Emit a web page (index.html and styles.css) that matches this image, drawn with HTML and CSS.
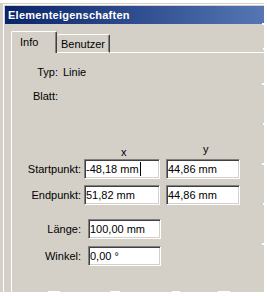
FILE: index.html
```html
<!DOCTYPE html>
<html lang="de">
<head>
    <meta charset="UTF-8">
    <title>Elementeigenschaften</title>
    <link rel="stylesheet" href="styles.css">
</head>
<body>

<div class="window">
    <div class="frame">
        <div class="titlebar">Elementeigenschaften</div>

        <div class="dialog">
            <div class="tabs">
                <div class="tab active">Info</div>
                <div class="tab">Benutzer</div>
                <div class="tab-rest"></div>
            </div>

            <div class="panel">
                <div class="info">
                    <span class="lbl">Typ:</span><span>Linie</span>
                    <span class="lbl">Blatt:</span><span></span>
                </div>

                <div class="coords">
                    <span></span>
                    <span class="head">x</span>
                    <span class="head head-y">y</span>

                    <span class="lbl">Startpunkt:</span>
                    <div class="field wide">-48,18 mm<span class="caret"></span></div>
                    <div class="field">44,86 mm</div>

                    <span class="lbl">Endpunkt:</span>
                    <div class="field wide">51,82 mm</div>
                    <div class="field">44,86 mm</div>
                </div>

                <div class="measures">
                    <span class="lbl">Länge:</span>
                    <div class="field">100,00 mm</div>
                    <span class="lbl">Winkel:</span>
                    <div class="field">0,00 °</div>
                </div>
            </div>
        </div>
    </div>
</div>

</body>
</html>
```

FILE: styles.css
```css
body {
    margin: 0;
    background-color: #ffffff;
    font-family: "Liberation Sans", Arial, sans-serif;
    font-size: 11px;
    color: #000000;
}
.window {
    margin-top: 3px;
    width: 265px;
    height: 290px;
    padding: 1px 0 0 3px;
    box-sizing: border-box;
    background-color: #d4d0c8;
    overflow: hidden;
    /* torn screenshot edge */
    clip-path: polygon(0 0, 264px 0, 264px 20px, 262px 20px, 262px 22px, 264px 22px, 264px 45px, 263px 45px, 263px 47px, 264px 47px, 264px 80px, 262px 80px, 262px 82px, 264px 82px, 264px 120px, 263px 120px, 263px 122px, 264px 122px, 264px 160px, 262px 160px, 262px 162px, 264px 162px, 264px 200px, 263px 200px, 263px 202px, 264px 202px, 264px 240px, 262px 240px, 262px 242px, 264px 242px, 264px 289px, 230px 289px, 230px 288px, 218px 288px, 218px 289px, 180px 289px, 180px 288px, 172px 288px, 172px 289px, 120px 289px, 120px 288px, 110px 288px, 110px 289px, 60px 289px, 60px 288px, 48px 288px, 48px 289px, 0 289px);
}
.frame {
    height: 100%;
    border-top: 1px solid #ffffff;
    border-left: 1px solid #ffffff;
    padding: 1px 0 0 1px;
    box-sizing: border-box;
}
.titlebar {
    height: 18px;
    line-height: 18px;
    padding-left: 3px;
    background: linear-gradient(to right, #0a246a, #5576b3);
    color: #ffffff;
    font-weight: bold;
    letter-spacing: 0.25px;
    white-space: nowrap;
}
.dialog {
    padding: 7px 0 0 6px;
}
.tabs {
    display: flex;
    align-items: flex-end;
}
.tab {
    box-sizing: border-box;
    height: 19px;
    width: 53px;
    padding: 3px 0 0 4px;
    line-height: 13px;
    border-top: 1px solid #ffffff;
    border-right: 1px solid #404040;
    border-bottom: 1px solid #ffffff;
    box-shadow: inset -1px 0 #808080;
    border-radius: 2px 2px 0 0;
}
.tab.active {
    height: 22px;
    width: 46px;
    padding: 4px 0 0 8px;
    border-left: 1px solid #ffffff;
    border-bottom: none;
}
.tab-rest {
    flex: 1;
    border-bottom: 1px solid #ffffff;
}
.panel {
    border-left: 1px solid #ffffff;
    height: 260px;
}
.lbl {
    text-align: right;
    white-space: nowrap;
}
.info {
    display: grid;
    grid-template-columns: 46px auto;
    column-gap: 5px;
    row-gap: 11px;
    line-height: 13px;
    padding-top: 13px;
}
.coords {
    display: grid;
    grid-template-columns: 72px 82px 74px;
    row-gap: 6px;
    align-items: center;
    margin-top: 43px;
}
.coords .lbl {
    padding-right: 3px;
}
.head {
    line-height: 13px;
    padding-left: 37px;
    align-self: start;
    margin-bottom: -6px;
}
.head-y {
    margin-top: -3px;
    margin-bottom: -3px;
}
.measures {
    display: grid;
    grid-template-columns: 76px 73px;
    row-gap: 7px;
    align-items: center;
    margin-top: 14px;
}
.measures .lbl {
    padding-right: 7px;
}
.field {
    box-sizing: border-box;
    height: 20px;
    line-height: 18px;
    padding-left: 1px;
    background-color: #ffffff;
    border: 1px solid;
    border-color: #808080 #ffffff #ffffff #808080;
    box-shadow: inset 1px 1px #404040, inset -1px -1px #d4d0c8;
    white-space: nowrap;
    overflow: hidden;
}
.field.wide {
    width: 76px;
}
.caret {
    display: inline-block;
    width: 1px;
    height: 14px;
    margin-left: 1px;
    background-color: #000000;
    vertical-align: -3px;
}
```
